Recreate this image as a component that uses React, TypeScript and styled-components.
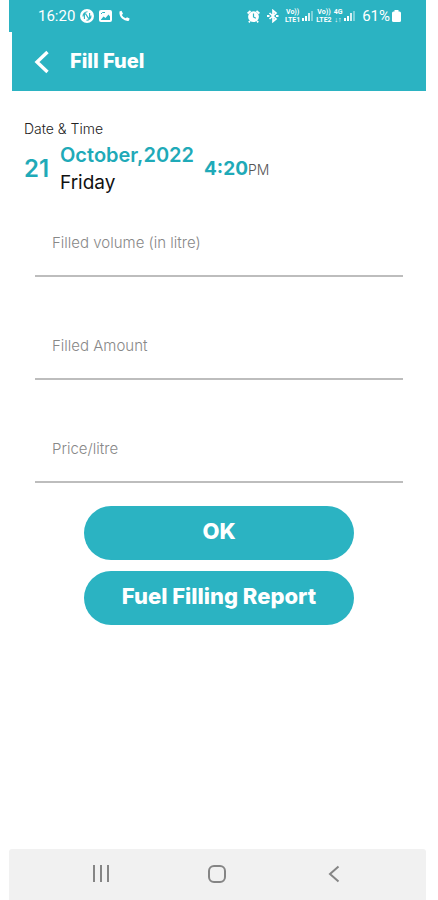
import React from "react";
import styled, { createGlobalStyle } from "styled-components";

const teal = "#2bb3c2";
const tealText = "#1faab8";

const GlobalStyle = createGlobalStyle`
  * { box-sizing: border-box; }
  body { margin: 0; background: #fff; font-family: Inter, "Open Sans", sans-serif; }
  button, input { font-family: inherit; }
`;

const Screen = styled.div`
  display: flex;
  flex-direction: column;
  min-height: 100vh;
  padding: 0 12px 0 9px;
`;

const StatusBar = styled.div`
  display: flex;
  align-items: center;
  justify-content: space-between;
  height: 32px;
  padding: 0 25px 0 29px;
  background: ${teal};
  color: #fff;
  font: 400 15px/20px Roboto, sans-serif;
`;

const StatusGroup = styled.div<{ $gap: number }>`
  display: flex;
  align-items: center;
  gap: ${(p) => p.$gap}px;
  svg { display: block; }
`;

const TinyLabel = styled.span`
  display: flex;
  flex-direction: column;
  align-items: center;
  font: 700 7px/8px Roboto, sans-serif;
`;

const AppBar = styled.header`
  display: flex;
  align-items: center;
  gap: 20px;
  height: 59px;
  margin-left: 3px;
  padding: 0 21px;
  background: ${teal};
  color: #fff;
`;

const Title = styled.h1`
  margin: 0 0 2px;
  font-size: 20px;
  line-height: 28px;
  font-weight: 800;
`;

const IconButton = styled.button`
  display: flex;
  align-items: center;
  justify-content: center;
  padding: 0;
  border: 0;
  background: none;
  color: inherit;
  cursor: pointer;
`;

const Content = styled.main`
  flex: 1;
  padding: 28px 14px 24px 15px;
`;

const SectionLabel = styled.div`
  font-size: 14px;
  line-height: 20px;
  font-weight: 300;
  color: #222;
`;

const DateRow = styled.div`
  display: flex;
  align-items: center;
  margin-top: 3px;
  padding-bottom: 2px;
`;

const Day = styled.div`
  width: 36px;
  font-size: 24px;
  line-height: 32px;
  font-weight: 600;
  color: ${tealText};
`;

const MonthBlock = styled.div`
  margin-right: 10px;
  line-height: 27px;
`;

const Month = styled.div`
  font-size: 20px;
  font-weight: 600;
  color: ${tealText};
`;

const Weekday = styled.div`
  font-size: 19px;
  color: #111;
`;

const Time = styled.div`
  display: flex;
  align-items: baseline;
  font-size: 19px;
  line-height: 27px;
  font-weight: 700;
  color: ${tealText};
`;

const Period = styled.span`
  font-size: 14px;
  font-weight: 300;
  color: #555;
`;

const Form = styled.form`
  display: flex;
  flex-direction: column;
  gap: 47px;
  margin: 23px 9px 0 11px;
`;

const Field = styled.input`
  display: block;
  width: 100%;
  height: 56px;
  padding: 11px 17px 23px;
  border: 0;
  border-bottom: 2px solid #bdbdbd;
  border-radius: 0;
  background: none;
  font-size: 15px;
  line-height: 20px;
  font-weight: 300;
  color: #222;
  outline: none;
  &::placeholder { color: #888; opacity: 1; }
`;

const Actions = styled.div`
  display: flex;
  flex-direction: column;
  gap: 11px;
  margin: -24px 49px 0;
`;

const PillButton = styled.button`
  height: 54px;
  padding: 0 16px 4px;
  border: 0;
  border-radius: 27px;
  background: ${teal};
  color: #fff;
  font-size: 22px;
  line-height: 28px;
  font-weight: 800;
  cursor: pointer;
`;

const NavBar = styled.nav`
  display: flex;
  align-items: center;
  justify-content: space-around;
  height: 51px;
  padding: 0 34px 2px;
  border-radius: 3px 3px 0 0;
  background: #f1f1f1;
  color: #858585;
`;

const Signal = () => (
  <svg width="12" height="10" viewBox="0 0 12 10" fill="#fff" aria-hidden="true">
    <rect x="0" y="7" width="2" height="3" />
    <rect x="3" y="5" width="2" height="5" />
    <rect x="6" y="2" width="2" height="8" opacity=".8" />
    <rect x="9" y="0" width="2" height="10" opacity=".4" />
  </svg>
);

const fields = ["Filled volume (in litre)", "Filled Amount", "Price/litre"];

export default function App() {
  return (
    <>
      <GlobalStyle />
      <Screen>
        <StatusBar>
          <StatusGroup $gap={5}>
            <span>16:20</span>
            <svg width="14" height="14" viewBox="0 0 14 14" aria-hidden="true">
              <circle cx="7" cy="7" r="7" fill="#fff" />
              <path d="M4.4 10V5.5Q4.4 4 5.7 5L8.3 9Q9.6 10 9.6 8.5V4M3 7.5A4.5 4.5 0 0 1 7.5 2.8M11 6.5A4.5 4.5 0 0 1 6.5 11.2" fill="none" stroke={teal} strokeWidth="1.1" />
            </svg>
            <svg width="13" height="12" viewBox="0 0 13 12" aria-hidden="true">
              <rect width="13" height="12" rx="2" fill="#fff" />
              <path d="M2 9.5 4.5 6.5 6.5 8 9.5 4.5 11 6.5V10H2Z" fill={teal} />
              <path d="M2 4 3.5 2.5H6" stroke={teal} fill="none" />
            </svg>
            <svg width="14" height="12" viewBox="0 0 14 12" aria-hidden="true">
              <path d="M2.5 1.5 4.5.8 6 3.7 4.8 5Q6 7.3 8.7 8.3L10 7.2 12.6 8.6 12 10.8Q8.5 11.6 5 8.5 2 5.6 2.5 1.5Z" fill="#fff" />
            </svg>
          </StatusGroup>
          <StatusGroup $gap={2}>
            <svg width="13" height="13" viewBox="0 0 13 13" aria-hidden="true">
              <path d="M.6 3.5 3.5.8M12.4 3.5 9.5.8M3 11 1.8 12.3M10 11l1.2 1.3" stroke="#fff" strokeWidth="1.8" />
              <circle cx="6.5" cy="6.7" r="5.4" fill="#fff" />
              <path d="M6.5 3.5V7L8.8 8.2" fill="none" stroke={teal} strokeWidth="1.2" />
            </svg>
            <svg width="21" height="14" viewBox="-4 0 21 14" fill="none" stroke="#fff" strokeWidth="1.7" aria-hidden="true">
              <path d="M3.5 4 10 10 7 12.5V1.5L10 4 3.5 10" />
              <path d="M1 7h2.5M10 7h2.5" strokeWidth="2" />
            </svg>
            <TinyLabel><span>Vo))</span><span>LTE1</span></TinyLabel>
            <Signal />
            <TinyLabel><span>Vo))</span><span>LTE2</span></TinyLabel>
            <TinyLabel><span>4G</span><span>↓↑</span></TinyLabel>
            <Signal />
            <span>&nbsp;61%</span>
            <svg width="9" height="12" viewBox="0 0 9 12" fill="#fff" aria-hidden="true">
              <rect x="2.5" width="4" height="3" />
              <rect y="1.5" width="9" height="10.5" rx="1.5" />
            </svg>
          </StatusGroup>
        </StatusBar>
        <AppBar>
          <IconButton type="button" aria-label="Back">
            <svg width="17" height="24" viewBox="0 0 17 24" fill="none" stroke="#fff" strokeWidth="3.4">
              <path d="M14.5 2 4 12 14.5 22" />
            </svg>
          </IconButton>
          <Title>Fill Fuel</Title>
        </AppBar>
        <Content>
          <SectionLabel>Date &amp; Time</SectionLabel>
          <DateRow>
            <Day>21</Day>
            <MonthBlock>
              <Month>October,2022</Month>
              <Weekday>Friday</Weekday>
            </MonthBlock>
            <Time>4:20<Period>PM</Period></Time>
          </DateRow>
          <Form onSubmit={(e) => e.preventDefault()}>
            {fields.map((name) => (
              <Field key={name} type="text" inputMode="decimal" placeholder={name} aria-label={name} />
            ))}
            <Actions>
              <PillButton type="submit">OK</PillButton>
              <PillButton type="button">Fuel Filling Report</PillButton>
            </Actions>
          </Form>
        </Content>
        <NavBar>
          <IconButton type="button" aria-label="Recent apps">
            <svg width="18" height="17" viewBox="0 0 18 17" stroke="currentColor" strokeWidth="2">
              <path d="M2 0v17M9 0v17M16 0v17" />
            </svg>
          </IconButton>
          <IconButton type="button" aria-label="Home">
            <svg width="18" height="18" viewBox="0 0 18 18" fill="none" stroke="currentColor" strokeWidth="2">
              <rect x="1" y="1" width="16" height="16" rx="5" />
            </svg>
          </IconButton>
          <IconButton type="button" aria-label="Navigate back">
            <svg width="18" height="18" viewBox="0 0 18 18" fill="none" stroke="currentColor" strokeWidth="2">
              <path d="M13.5 1.5 5 9 13.5 16.5" />
            </svg>
          </IconButton>
        </NavBar>
      </Screen>
    </>
  );
}
